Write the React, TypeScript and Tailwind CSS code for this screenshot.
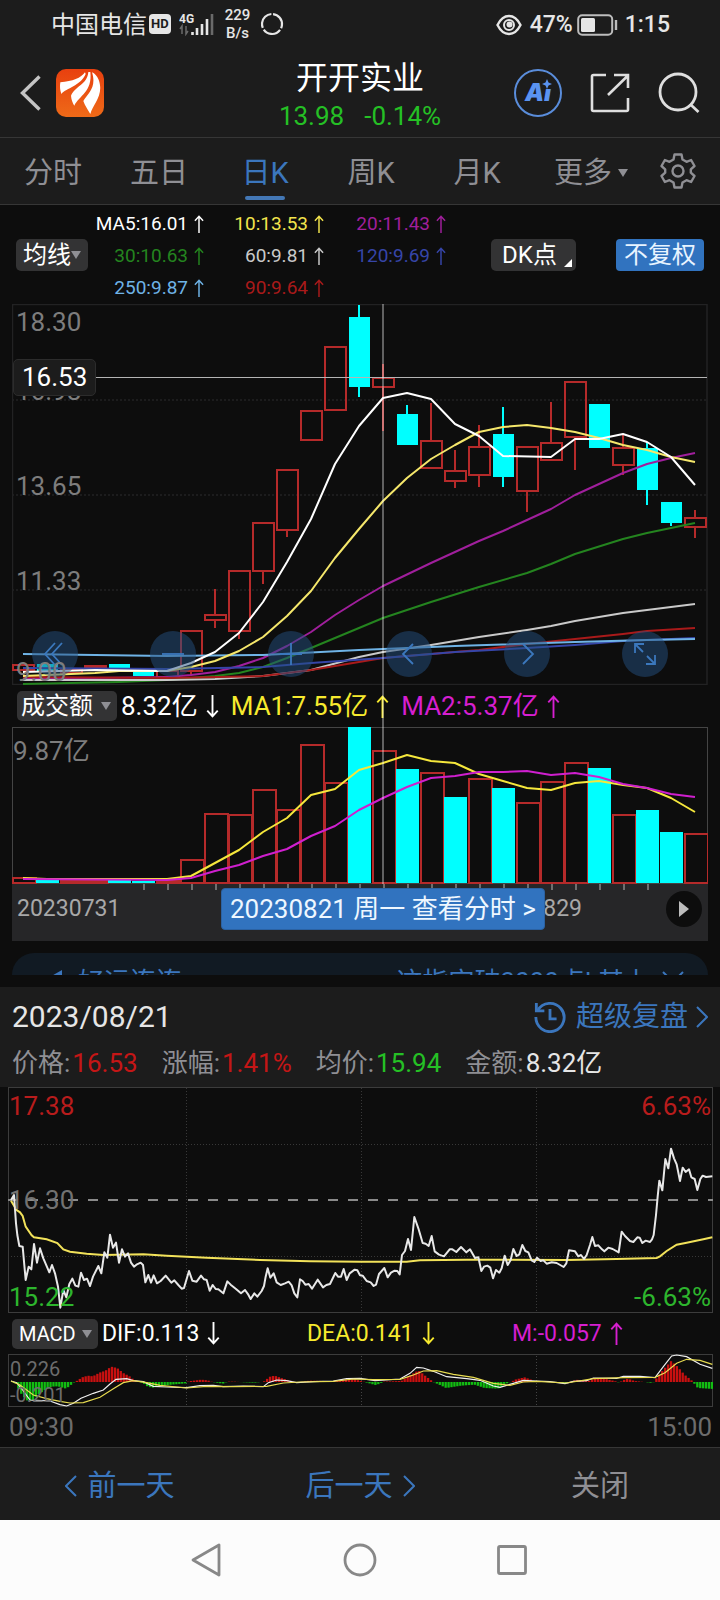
import type { ReactNode } from "react";

type Point = [number, number];

type Candle = {
	up: boolean;
	top: number;
	bottom: number;
	high?: number;
	low?: number;
};

// Centre of the n-th trading day on the daily charts
const dayX = (i: number) => 23 + i * 24;

const CANDLES: Candle[] = [
	{ up: true, top: 665, bottom: 670 },
	{ up: false, top: 664, bottom: 672 },
	{ up: true, top: 670, bottom: 673 },
	{ up: true, top: 666, bottom: 668 },
	{ up: false, top: 664, bottom: 668 },
	{ up: false, top: 672, bottom: 676 },
	{ up: true, top: 671, bottom: 677 },
	{ up: true, top: 631, bottom: 671, low: 676 },
	{ up: true, top: 615, bottom: 620, high: 589, low: 628 },
	{ up: true, top: 571, bottom: 631, low: 639 },
	{ up: true, top: 523, bottom: 571, low: 584 },
	{ up: true, top: 470, bottom: 530, low: 537 },
	{ up: true, top: 411, bottom: 440 },
	{ up: true, top: 347, bottom: 410 },
	{ up: false, top: 317, bottom: 387, high: 305, low: 397 },
	{ up: true, top: 378, bottom: 387, high: 364, low: 431 },
	{ up: false, top: 414, bottom: 445, high: 405 },
	{ up: true, top: 441, bottom: 468, high: 403 },
	{ up: true, top: 471, bottom: 481, high: 450, low: 488 },
	{ up: true, top: 447, bottom: 475, high: 425, low: 487 },
	{ up: false, top: 434, bottom: 477, high: 407, low: 487 },
	{ up: true, top: 447, bottom: 491, low: 512 },
	{ up: true, top: 443, bottom: 460, high: 402 },
	{ up: true, top: 382, bottom: 437, low: 470 },
	{ up: false, top: 404, bottom: 448 },
	{ up: true, top: 448, bottom: 465, high: 435, low: 475 },
	{ up: false, top: 448, bottom: 490, high: 442, low: 505 },
	{ up: false, top: 502, bottom: 523, low: 526 },
	{ up: true, top: 518, bottom: 527, high: 510, low: 538 },
];

// [day, y] pairs
const AVERAGES: { color: string; points: Point[] }[] = [
	{
		color: "#24841f",
		points: [
			[0, 684], [2, 683], [4, 682], [6, 680], [8, 676], [9, 673], [10, 667],
			[11, 658], [12, 648], [13, 638], [14, 628], [15, 618], [17, 602],
			[19, 587], [21, 573], [22, 564], [23, 554], [25, 539], [26, 533],
			[27, 528], [28, 523],
		],
	},
	{
		color: "#a01f9c",
		points: [
			[0, 679], [3, 678], [6, 677], [7, 675], [8, 672], [9, 666], [10, 658],
			[11, 646], [12, 632], [13, 615], [14, 600], [15, 586], [17, 563],
			[19, 541], [20, 531], [21, 520], [22, 509], [23, 495], [24, 484],
			[25, 473], [26, 464], [27, 458], [28, 453],
		],
	},
	{
		color: "#c9c9c9",
		points: [
			[0, 680], [6, 680], [8, 679], [10, 676], [12, 670], [14, 657],
			[15, 652], [17, 645], [19, 637], [21, 630], [22, 626], [23, 621],
			[25, 613], [26, 610], [28, 604],
		],
	},
	{
		color: "#a91a1a",
		points: [
			[0, 677], [6, 678], [10, 676], [12, 670], [14, 662], [15, 658],
			[17, 654], [19, 650], [21, 644], [23, 639], [25, 634], [26, 631],
			[28, 628],
		],
	},
	{
		color: "#3645a8",
		points: [
			[0, 668], [6, 669], [10, 667], [12, 663], [15, 658], [18, 652],
			[21, 648], [23, 645], [25, 641], [28, 638],
		],
	},
	{
		color: "#6fb3e6",
		points: [
			[0, 654], [6, 656], [10, 655], [14, 650], [18, 646], [23, 642],
			[26, 640], [28, 639],
		],
	},
	{
		color: "#f5e76b",
		points: [
			[0, 676], [2, 674], [3, 673], [4, 671], [6, 671], [7, 667], [8, 661],
			[9, 651], [10, 637], [11, 616], [12, 591], [13, 558], [14, 529],
			[15, 501], [16, 478], [17, 459], [18, 445], [19, 432], [20, 427],
			[21, 425], [22, 428], [23, 432], [24, 438], [25, 445], [26, 450],
			[27, 457], [28, 462],
		],
	},
	{
		color: "#ffffff",
		points: [
			[0, 672], [3, 670], [6, 671], [7, 663], [8, 652], [9, 633], [10, 602],
			[11, 562], [12, 519], [13, 464], [14, 426], [15, 398], [16, 393],
			[17, 399], [18, 424], [19, 436], [20, 456], [22, 457], [23, 439],
			[24, 439], [25, 434], [26, 442], [27, 457], [28, 485],
		],
	},
];

const VOLUMES: [boolean, number][] = [
	[true, 878], [false, 880], [true, 881], [true, 881], [false, 880],
	[false, 881], [true, 881], [true, 860], [true, 814], [true, 815],
	[true, 790], [true, 810], [true, 745], [true, 783], [false, 727],
	[true, 751], [false, 769], [true, 773], [false, 797], [true, 779],
	[false, 788], [true, 803], [true, 782], [true, 763], [false, 768],
	[true, 815], [false, 810], [false, 832], [true, 834],
];

const VOLUME_MA1: Point[] = [
	[0, 878], [1, 879], [6, 879], [7, 876], [8, 863], [9, 850], [10, 832],
	[11, 818], [12, 795], [13, 789], [14, 770], [15, 763], [16, 755], [17, 761],
	[18, 763], [19, 774], [20, 781], [21, 788], [22, 790], [23, 783], [24, 781],
	[25, 785], [26, 788], [27, 798], [28, 812],
];

const VOLUME_MA2: Point[] = [
	[0, 879], [6, 880], [7, 878], [8, 871], [9, 865], [10, 856], [11, 849],
	[12, 836], [13, 826], [14, 810], [15, 798], [16, 787], [17, 778], [18, 776],
	[19, 772], [20, 772], [21, 771], [22, 775], [23, 773], [24, 777], [25, 784],
	[26, 788], [27, 794], [28, 797],
];

const PRICE =
	"33,360 42,345 48,430 52,465 58,498 68,500 77,600 86,560 94,568 102,492 111,548 120,505 130,535 148,577 156,555 165,580 174,620 181,683 190,630 199,652 208,612 217,596 226,617 235,620 243,578 252,600 261,596 270,618 279,590 295,558 304,580 313,517 322,533 330,464 339,503 348,488 357,548 366,508 375,530 384,520 393,548 402,560 411,553 422,548 429,555 436,607 445,585 453,608 461,586 471,610 482,603 497,587 514,608 523,601 535,615 545,626 552,624 567,573 577,602 590,605 603,587 612,598 620,600 629,632 638,615 647,627 655,628 670,640 682,604 692,614 708,627 723,640 735,630 745,644 752,657 763,640 772,650 785,633 792,618 797,590 803,565 811,593 821,580 830,607 842,615 855,610 866,605 875,616 883,640 892,652 900,598 908,603 916,614 926,612 936,626 953,599 969,622 979,615 990,612 1006,579 1014,590 1023,590 1031,567 1040,600 1049,580 1064,569 1072,571 1080,586 1088,587 1100,603 1112,607 1121,618 1128,614 1137,582 1153,564 1163,592 1173,578 1184,572 1192,573 1199,583 1206,525 1215,513 1224,477 1233,510 1243,411 1255,445 1268,489 1277,491 1286,498 1295,468 1304,514 1317,524 1332,529 1349,508 1357,508 1369,516 1383,501 1399,517 1410,508 1425,534 1435,532 1444,573 1452,560 1462,557 1471,563 1479,595 1488,570 1498,578 1505,565 1514,527 1523,555 1532,540 1540,507 1550,528 1558,523 1567,495 1576,513 1585,517 1595,541 1603,546 1611,533 1622,543 1630,541 1640,551 1655,547 1670,549 1691,561 1699,550 1707,511 1725,514 1735,529 1743,525 1752,537 1760,525 1770,495 1777,471 1785,498 1795,496 1806,508 1813,514 1825,503 1838,507 1856,517 1865,455 1875,468 1890,483 1900,486 1912,472 1919,473 1927,489 1937,482 1950,486 1956,478 1961,465 1968,405 1973,350 1978,302 1987,331 1996,237 2005,265 2013,206 2022,235 2030,253 2040,303 2048,263 2057,276 2067,268 2074,292 2084,297 2092,330 2101,297 2108,287 2118,291 2137,289";

const AVERAGE_PRICE =
	"33,362 50,390 60,397 68,408 77,440 95,466 102,472 140,478 172,489 190,508 210,515 260,521 310,525 430,523 500,527 620,533 780,540 930,544 1080,545 1220,545 1260,541 1400,539 1700,540 1850,537 1970,534 1980,529 2000,513 2030,494 2060,488 2110,478 2137,472";

// [x, height above zero]
const MACD_SHAPE: Point[] = [
	[33, 0], [42, -3], [60, -35], [77, -55], [92, -57], [110, -38], [130, -25],
	[150, -14], [170, -13], [195, -20], [208, -10], [217, -2], [225, 2],
	[243, 14], [260, 19], [275, 17], [295, 28], [313, 34], [330, 46],
	[348, 42], [366, 27], [384, 18], [400, 5], [415, 0], [425, -3],
	[440, -14], [455, -17], [480, -12], [510, -8], [555, -4], [562, 2],
	[600, 7], [620, 5], [630, 1], [640, -1], [665, -5], [680, 1], [700, 1],
	[715, 0], [730, -1], [760, -2], [780, 0], [792, 3], [803, 15], [820, 19],
	[840, 12], [860, 6], [880, 0], [895, -2], [905, 1], [925, 4], [970, 3],
	[1000, 3], [1030, 7], [1060, 8], [1080, 3], [1090, 0], [1108, -5],
	[1122, -9], [1137, -5], [1146, 1], [1200, 3], [1210, 10], [1235, 25],
	[1252, 35], [1268, 22], [1290, 5], [1300, -2], [1310, -6], [1335, -18],
	[1380, -11], [1420, -8], [1450, -18], [1490, -20], [1515, -5], [1530, 1],
	[1545, 8], [1570, 14], [1590, 7], [1600, 1], [1660, 0], [1690, -4],
	[1710, 1], [1725, 7], [1760, 2], [1780, 11], [1810, 10], [1840, 3],
	[1855, -2], [1865, 5], [1880, 10], [1900, 3], [1930, 0], [1955, -3],
	[1965, 10], [1985, 35], [2010, 63], [2030, 45], [2050, 22], [2070, 6],
	[2078, -3], [2090, -18], [2139, -21],
];

const DIF =
	"33,213 50,218 68,240 90,270 110,271 150,273 180,284 200,288 220,280 243,265 280,250 310,240 330,222 348,208 380,206 400,212 430,215 460,229 500,231 560,233 600,227 640,226 670,230 730,228 790,230 805,218 830,210 860,212 890,218 940,215 1000,213 1040,206 1080,205 1125,212 1200,207 1230,190 1250,172 1270,174 1300,184 1340,200 1400,206 1440,211 1480,228 1500,232 1540,220 1570,211 1610,213 1650,215 1695,221 1720,214 1760,212 1780,204 1850,205 1870,199 1920,199 1965,203 1990,170 2015,138 2030,135 2060,140 2100,163 2137,175";

const DEA =
	"33,213 60,225 100,255 140,266 180,274 210,279 250,278 300,262 340,236 370,218 400,212 440,218 480,226 560,234 620,229 700,230 800,229 850,219 900,216 1000,214 1060,207 1120,209 1200,208 1240,195 1270,183 1310,182 1360,193 1420,202 1480,220 1530,226 1570,216 1610,214 1700,219 1780,206 1870,203 1965,202 1995,188 2030,160 2060,148 2100,151 2137,163";

function dayLine(points: Point[]) {
	return points.map(([i, y]) => `${dayX(i)},${y}`).join(" ");
}

function valueAt(shape: Point[], x: number) {
	for (let i = 1; i < shape.length; i++) {
		const [x0, y0] = shape[i - 1];
		const [x1, y1] = shape[i];
		if (x <= x1) return y0 + ((y1 - y0) * (x - x0)) / (x1 - x0);
	}
	return 0;
}

const MACD_BARS = Array.from({ length: 240 }, (_, i) => {
	const x = 34 + i * 8.78;
	return { x, h: valueAt(MACD_SHAPE, x) };
});

function Arrow({ down = false, large = false }: { down?: boolean; large?: boolean }) {
	return (
		<svg
			viewBox="0 0 12 22"
			fill="none"
			stroke="currentColor"
			strokeWidth="1.800"
			className={`${large ? "h-[23px] w-[13px]" : "h-[18px] w-[10px]"} ${down ? "rotate-180" : ""}`}
		>
			<path d="M6 22V1.5M1 7l5-5.500 5 5.500" />
		</svg>
	);
}

function Caret({ className = "" }: { className?: string }) {
	return (
		<svg viewBox="0 0 10 8" className={`h-2 w-2.5 ${className}`}>
			<path d="M0 0h10L5 8z" fill="currentColor" />
		</svg>
	);
}

function Chevron({ left = false, className = "" }: { left?: boolean; className?: string }) {
	return (
		<svg
			viewBox="0 0 12 22"
			fill="none"
			stroke="currentColor"
			strokeWidth="2"
			className={className}
		>
			<path d={left ? "M11 1L1 11l10 10" : "M1 1l10 10L1 21"} />
		</svg>
	);
}

function StatusBar() {
	return (
		<div className="flex h-12 items-center justify-between pr-[50px] pl-[51px] text-[#e6e6e6]">
			<div className="flex items-center">
				<span className="pt-0.5 text-[24px] leading-8">中国电信</span>
				<span className="ml-0.5 rounded-[4px] bg-[#e6e6e6] px-0.5 text-[13px] leading-5 font-bold text-[#1c1c1c]">
					HD
				</span>
				<svg viewBox="0 0 38 24" className="ml-2 h-6 w-[38px]">
					<text x="0" y="11" fontSize="12" fontWeight="700" fill="#e6e6e6">
						4G
					</text>
					<path
						d="M3 22v-8l-2 3M7 14v8l2-3"
						fill="none"
						stroke="#6a6a6a"
						strokeWidth="1.500"
					/>
					<path
						d="M13.500 23v-3M18 23v-7M23 23V12M28 23V7"
						stroke="#e6e6e6"
						strokeWidth="2.600"
					/>
					<path d="M33 23V2" stroke="#6a6a6a" strokeWidth="2.600" />
				</svg>
				<span className="ml-2 flex flex-col items-center text-[15px] leading-[18px] font-medium">
					<span>229</span>
					<span>B/s</span>
				</span>
				<svg viewBox="0 0 24 24" className="ml-2.5 size-6">
					<circle
						cx="12"
						cy="12"
						r="10"
						fill="none"
						stroke="#e6e6e6"
						strokeWidth="2.200"
						strokeDasharray="18.900 2"
						transform="rotate(-84 12 12)"
					/>
				</svg>
			</div>
			<div className="flex items-center pt-0.5">
				<svg viewBox="0 0 26 22" className="h-[22px] w-[26px]" fill="none" stroke="#e6e6e6">
					<path
						d="M1.500 11C4 6 8 2 13 2s9 4 11.500 9C22 16 18 20 13 20S4 16 1.500 11z"
						strokeWidth="2.400"
					/>
					<circle cx="13" cy="11" r="5" strokeWidth="2" />
					<circle cx="13.500" cy="10.500" r="3" fill="#e6e6e6" stroke="none" />
				</svg>
				<span className="ml-2 text-[23px] leading-8 font-medium">47%</span>
				<svg viewBox="0 0 42 22" className="ml-1 h-[22px] w-[42px]">
					<rect
						x="1.200"
						y="1.200"
						width="34"
						height="19.600"
						rx="4"
						fill="none"
						stroke="#bdbdbd"
						strokeWidth="2"
					/>
					<rect x="4" y="4" width="14" height="14" rx="1.500" fill="#e6e6e6" />
					<path d="M39 6v10" stroke="#bdbdbd" strokeWidth="2.400" />
				</svg>
				<span className="ml-1.5 text-[23px] leading-8 font-medium">1:15</span>
			</div>
		</div>
	);
}

function Header() {
	return (
		<header className="flex h-[90px] items-center border-b border-[#363636] px-5">
			<div className="flex flex-1 items-center">
				<button type="button" aria-label="返回">
					<svg viewBox="0 0 22 36" className="h-9 w-[22px]">
						<path d="M19.500 1.500L2.500 18l17 16.500" fill="none" stroke="#c4c4c4" strokeWidth="3.400" />
					</svg>
				</button>
				<svg viewBox="0 0 144 144" className="ml-3.5 size-12">
					<defs>
						<linearGradient id="logo" x1="0" y1="0" x2="0" y2="1">
							<stop offset="0" stopColor="#e8400f" />
							<stop offset="1" stopColor="#ee6a18" />
						</linearGradient>
					</defs>
					<rect width="144" height="144" rx="30" fill="url(#logo)" />
					<g fill="#fff">
						<path d="M87 10C75 27 50 37 13 40c-2 12-1 24 3 35C32 56 72 52 89 15z" />
						<path d="M97 9c-3 38-40 42-52 71 1 12 5 22 10 30 14-30 55-42 48-101z" />
						<path d="M108 10c14 44-10 62-26 86 5 14 13 26 21 39 8-30 42-56 25-103-5-11-12-19-20-22z" />
					</g>
				</svg>
			</div>
			<div className="flex flex-col items-center pt-1.5">
				<h1 className="text-[32px] leading-10 font-normal text-white">开开实业</h1>
				<p className="flex gap-5 text-[26px] leading-9 text-[#25c025]">
					<span>13.98</span>
					<span>-0.14%</span>
				</p>
			</div>
			<div className="flex flex-1 items-center justify-end gap-7">
				<button
					type="button"
					className="relative flex size-12 items-center justify-center rounded-full border-2 border-[#5a8ddb] text-[#5a93f0]"
				>
					<span className="font-['Inter'] text-[24px] leading-6 font-black italic">Ai</span>
					<svg viewBox="0 0 10 10" className="absolute top-2 right-2 size-2.5 bg-[#1c1c1c]">
						<path d="M5 0l1.500 3.500L10 5 6.500 6.500 5 10 3.500 6.500 0 5l3.500-1.500z" fill="currentColor" />
					</svg>
				</button>
				<button type="button" aria-label="分享">
					<svg viewBox="0 0 40 40" className="size-10" fill="none" stroke="#dedede" strokeWidth="2.600">
						<path d="M16 2H3.500Q2 2 2 3.500v33Q2 38 3.500 38h33q1.500 0 1.500-1.500V25" />
						<path d="M18 22L38 2.500M24 2h14v13" />
					</svg>
				</button>
				<button type="button" aria-label="搜索">
					<svg viewBox="0 0 42 42" className="size-[42px]" fill="none" stroke="#dedede" strokeWidth="2.800">
						<circle cx="20" cy="20" r="18" />
						<path d="M32 32l8.500 8" />
					</svg>
				</button>
			</div>
		</header>
	);
}

function Tabs() {
	const tabs = ["分时", "五日", "日K", "周K", "月K"];
	return (
		<nav className="flex h-[67px] border-b border-[#363636] text-[29px] leading-10 text-[#8f8f94]">
			{tabs.map((tab) => (
				<button
					key={tab}
					type="button"
					className={`relative flex-1 pt-1 ${tab === "日K" ? "text-[#3b76bd]" : ""}`}
				>
					{tab}
					{tab === "日K" && (
						<span className="absolute bottom-1 left-1/2 h-1 w-10 -translate-x-1/2 rounded-full bg-[#4377b5]" />
					)}
				</button>
			))}
			<button type="button" className="flex-1 pt-1">
				<span className="flex items-center justify-center gap-1.5 pl-4">
					更多
					<Caret />
				</span>
			</button>
			<button type="button" aria-label="设置" className="flex w-[84px] items-center justify-center">
				<svg viewBox="0 0 36 36" className="size-9" fill="none" stroke="#8f8f94" strokeWidth="2.400">
					<path
						strokeLinejoin="round"
						d="M14.500 1.500h7l1 5 4 2.300 4.600-1.800 3.400 6-3.700 3.300v3.400l3.700 3.300-3.400 6-4.600-1.800-4 2.300-1 5h-7l-1-5-4-2.300L4.900 29l-3.400-6 3.700-3.300v-3.400L1.500 13l3.400-6 4.600 1.800 4-2.300z"
					/>
					<circle cx="18" cy="18" r="5.500" />
				</svg>
			</button>
		</nav>
	);
}

function Legend() {
	const items = [
		{ text: "MA5:16.01", color: "text-white" },
		{ text: "10:13.53", color: "text-[#f2e44c]" },
		{ text: "20:11.43", color: "text-[#a01f9c]" },
		{ text: "30:10.63", color: "text-[#24841f]" },
		{ text: "60:9.81", color: "text-[#c9c9c9]" },
		{ text: "120:9.69", color: "text-[#3645a8]" },
		{ text: "250:9.87", color: "text-[#6fb3e6]" },
		{ text: "90:9.64", color: "text-[#a91a1a]" },
	];
	return (
		<div className="flex h-[99px] items-center px-4">
			<button
				type="button"
				className="flex h-8 w-[72px] items-center justify-center rounded-[5px] bg-[#333334] text-[24px] leading-8 text-white"
			>
				均线
				<Caret className="text-[#8f8f94]" />
			</button>
			<div className="grid grid-cols-[116px_120px_122px] pt-0.5 text-[19px] leading-8">
				{items.map((item) => (
					<span key={item.text} className={`flex items-center justify-end gap-1.5 ${item.color}`}>
						{item.text}
						<Arrow />
					</span>
				))}
			</div>
			<button
				type="button"
				className="relative ml-[45px] h-8 w-[85px] rounded-[5px] bg-[#333334] pr-2 text-[24px] leading-8 text-white"
			>
				DK点
				<svg viewBox="0 0 8 8" className="absolute right-1 bottom-1 size-2">
					<path d="M8 0v8H0z" fill="#fff" />
				</svg>
			</button>
			<button
				type="button"
				className="ml-auto h-8 w-[88px] rounded-[4px] bg-[#3173bf] text-[24px] leading-8 text-[#e8f4ff]"
			>
				不复权
			</button>
		</div>
	);
}

function RoundButton({ label, children }: { label: string; children: ReactNode }) {
	return (
		<button
			type="button"
			aria-label={label}
			className="flex size-[46px] items-center justify-center rounded-full bg-[#24507f]/50"
		>
			<svg viewBox="0 0 24 24" className="size-6" fill="none" stroke="#3b78bd" strokeWidth="1.800">
				{children}
			</svg>
		</button>
	);
}

function CandleChart() {
	return (
		<div className="relative">
			<svg viewBox="12 304 696 381" className="block h-auto w-full">
				<g stroke="#222223" strokeWidth="1.500" fill="none">
					<rect x="12.500" y="304.500" width="694.500" height="380" />
					<path d="M12 400h695M12 495h695M12 590h695" strokeDasharray="2 2" />
				</g>
				{CANDLES.map((c, i) => {
					const x = dayX(i);
					const color = c.up ? "#b52a2a" : "#00ffff";
					return (
						<g key={i} stroke={color} strokeWidth="2">
							{c.high && <path d={`M${x} ${c.high}V${c.top}`} />}
							{c.low && <path d={`M${x} ${c.bottom}V${c.low}`} />}
							{c.up ? (
								<rect x={x - 10} y={c.top} width="21" height={c.bottom - c.top} fill="none" />
							) : (
								<rect
									x={x - 10}
									y={c.top}
									width="21"
									height={c.bottom - c.top}
									fill={color}
									stroke="none"
								/>
							)}
						</g>
					);
				})}
				{AVERAGES.map((line) => (
					<polyline
						key={line.color}
						points={dayLine(line.points)}
						fill="none"
						stroke={line.color}
						strokeWidth="2"
						strokeLinejoin="round"
					/>
				))}
				<path d="M96 377.500h611" stroke="#b4b4b4" strokeWidth="1.200" />
			</svg>
			<div className="absolute inset-x-0 bottom-2 flex justify-between pr-10 pl-5">
				<RoundButton label="最早">
					<path d="M12 1L2 12l10 11M19 1L9 12l10 11" />
				</RoundButton>
				<RoundButton label="缩小">
					<path d="M1 12h22" />
				</RoundButton>
				<RoundButton label="放大">
					<path d="M1 12h22M12 1v22" />
				</RoundButton>
				<RoundButton label="左移">
					<path d="M16 2L6 12l10 10" />
				</RoundButton>
				<RoundButton label="右移">
					<path d="M8 2l10 10L8 22" />
				</RoundButton>
				<RoundButton label="全屏">
					<path d="M2 11V2h9M2 2l8 8M22 13v9h-9M22 22l-8-8" />
				</RoundButton>
			</div>
			<div className="text-[26px] leading-8 text-[#7d7d7d]">
				<span className="absolute top-[2px] left-1">18.30</span>
				<span className="absolute top-[71px] left-1">16.98</span>
				<span className="absolute top-[166px] left-1">13.65</span>
				<span className="absolute top-[261px] left-1">11.33</span>
				<span className="absolute top-[352px] left-1">9.00</span>
			</div>
			<span className="absolute top-[55px] left-px rounded-[5px] border border-[#2c2c2c] bg-[#1c1c1c] px-2 text-[26px] leading-[35px] text-white">
				16.53
			</span>
		</div>
	);
}

function VolumeHeader() {
	return (
		<div className="flex h-[42px] items-center pl-[5px] text-[26px] leading-8">
			<button
				type="button"
				className="flex h-[30px] w-[100px] items-center justify-between rounded-[5px] bg-[#333334] pr-1.5 pl-1 text-[24px] leading-[30px] text-white"
			>
				成交额
				<Caret className="text-[#8f8f94]" />
			</button>
			<span className="ml-1 flex items-center gap-2 text-white">
				8.32亿
				<Arrow down large />
			</span>
			<span className="ml-3 flex items-center gap-2 text-[#f7ea2e]">
				MA1:7.55亿
				<Arrow large />
			</span>
			<span className="ml-3 flex items-center gap-2 text-[#d61fd0]">
				MA2:5.37亿
				<Arrow large />
			</span>
		</div>
	);
}

function VolumeChart() {
	return (
		<div className="relative">
			<svg viewBox="12 727 696 157" className="block h-auto w-full">
				<rect x="12.500" y="727.500" width="695" height="156" fill="none" stroke="#444" />
				{VOLUMES.map(([up, y], i) => {
					const x = dayX(i);
					return up ? (
						<rect
							key={i}
							x={x - 10}
							y={y}
							width="23"
							height={883 - y}
							fill="none"
							stroke="#b52a2a"
							strokeWidth="2"
						/>
					) : (
						<rect key={i} x={x - 11} y={y} width="23" height={883 - y} fill="#00ffff" />
					);
				})}
				<g fill="none" strokeWidth="2" strokeLinejoin="round">
					<polyline points={dayLine(VOLUME_MA1)} stroke="#f5e73c" />
					<polyline points={dayLine(VOLUME_MA2)} stroke="#cf1fce" />
				</g>
			</svg>
			<span className="absolute top-2 left-px text-[26px] leading-8 text-[#7d7d7d]">9.87亿</span>
		</div>
	);
}

function DateAxis() {
	return (
		<div className="relative h-[57px] bg-[#262628]">
			<svg viewBox="12 884 696 6" className="block h-auto w-full">
				{Array.from({ length: 22 }, (_, i) => (
					<path key={i} d={`M${144 + i * 24} 884v6`} stroke="#6f6f6f" strokeWidth="2" />
				))}
			</svg>
			<div className="absolute inset-x-0 top-1 flex h-[42px] items-center pr-1.5 pl-[5px] text-[23px] leading-8 text-[#a8a8a8]">
				<span>20230731</span>
				<span className="ml-auto pr-[84px]">20230829</span>
				<button
					type="button"
					aria-label="播放"
					className="flex size-9 items-center justify-center rounded-full bg-[#0d0d0d]"
				>
					<svg viewBox="0 0 10 16" className="h-4 w-2.5">
						<path d="M0 0l10 8-10 8z" fill="#bdbdbd" />
					</svg>
				</button>
			</div>
			<button
				type="button"
				className="absolute top-1 left-[209px] h-[42px] rounded-[4px] border border-[#2b62a3] bg-[#3173bf] px-2 text-[26px] leading-8 whitespace-nowrap text-[#eef7ff]"
			>
				20230821 周一 查看分时 &gt;
			</button>
		</div>
	);
}

function Banner() {
	return (
		<div className="mx-3 mt-3 h-[22px] overflow-hidden rounded-t-[34px] bg-[#111a23]">
			<a
				href="#banner"
				className="flex h-[58px] items-center pr-6 pl-9 text-[26px] leading-8 text-[#3b76bd]"
			>
				<svg viewBox="0 0 16 24" className="h-6 w-4">
					<path d="M14 0v24L0 14V8z" fill="currentColor" />
				</svg>
				<span className="ml-3.5">好运连连</span>
				<span className="ml-auto">这指定破3000点! 其上</span>
				<svg viewBox="0 0 22 22" className="ml-3 size-[22px]">
					<path d="M1 1l20 20M21 1L1 21" stroke="currentColor" strokeWidth="2" />
				</svg>
			</a>
		</div>
	);
}

function DayPanelHeader() {
	return (
		<div className="h-[100px] bg-[#1c1c1c] px-3 pt-2.5">
			<div className="flex h-10 items-center justify-between">
				<h2 className="text-[30px] leading-10 text-[#e6e6e6]">2023/08/21</h2>
				<a href="#replay" className="flex items-center text-[28px] leading-10 text-[#3b76bd]">
					<svg
						viewBox="0 0 34 34"
						className="mr-2.5 size-8"
						fill="none"
						stroke="currentColor"
						strokeWidth="3"
					>
						<path d="M4 10A15 15 0 1 1 2 17" />
						<path d="M2.500 2v8.500H11" />
						<path d="M17 8.500V19h7" />
					</svg>
					超级复盘
					<Chevron className="ml-2 h-[22px] w-3" />
				</a>
			</div>
			<dl className="mt-1.5 flex h-10 items-center gap-6 text-[26px] leading-10 text-[#8f8f94]">
				<div className="flex gap-0.5">
					<dt>价格:</dt>
					<dd className="text-[#c41616]">16.53</dd>
				</div>
				<div className="flex gap-0.5">
					<dt>涨幅:</dt>
					<dd className="text-[#c41616]">1.41%</dd>
				</div>
				<div className="flex gap-0.5">
					<dt>均价:</dt>
					<dd className="text-[#25c025]">15.94</dd>
				</div>
				<div className="flex gap-0.5">
					<dt>金额:</dt>
					<dd className="text-[#e6e6e6]">8.32亿</dd>
				</div>
			</dl>
		</div>
	);
}

function IntradayChart() {
	return (
		<div className="relative text-[26px] leading-8">
			{/* three units to the pixel */}
			<svg viewBox="24 21 2115 678" className="block h-auto w-full" fill="none">
				<rect x="25.500" y="22.500" width="2112" height="675" stroke="#3c3c3c" strokeWidth="3" />
				<path
					d="M33 193.500h2105M33 529.500h2105M559.500 24v672M1084.500 24v672M1609.500 24v672"
					stroke="#383838"
					strokeWidth="3"
					strokeDasharray="3 6"
				/>
				<path d="M24 360h2115" stroke="#8a8a8a" strokeWidth="6" strokeDasharray="30 30" />
				<polyline points={AVERAGE_PRICE} stroke="#f2e25a" strokeWidth="6" />
				<polyline points={PRICE} stroke="#e8e8e8" strokeWidth="6" strokeLinejoin="round" />
			</svg>
			<span className="absolute top-[3px] left-px text-[#b81c1c]">17.38</span>
			<span className="absolute top-1/2 left-px -translate-y-1/2 text-[#727272]">16.30</span>
			<span className="absolute bottom-0 left-px text-[#2db52d]">15.22</span>
			<span className="absolute top-[3px] right-0.5 text-[#b81c1c]">6.63%</span>
			<span className="absolute right-0.5 bottom-0 text-[#2db52d]">-6.63%</span>
		</div>
	);
}

function MacdHeader() {
	return (
		<div className="flex h-[41px] items-center pl-1 text-[23px] leading-8">
			<div className="flex w-[295px] items-center">
				<button
					type="button"
					className="flex h-[30px] w-[86px] items-center justify-between rounded-[5px] bg-[#333334] pr-1.5 pl-[7px] text-[20px] leading-[30px] text-white"
				>
					MACD
					<Caret className="text-[#8f8f94]" />
				</button>
				<span className="ml-1 flex items-center gap-2 text-white">
					DIF:0.113
					<Arrow down large />
				</span>
			</div>
			<span className="flex w-[205px] items-center gap-2 text-[#f7ea2e]">
				DEA:0.141
				<Arrow down large />
			</span>
			<span className="flex items-center gap-2 text-[#d61fd0]">
				M:-0.057
				<Arrow large />
			</span>
		</div>
	);
}

function MacdChart() {
	return (
		<div className="relative text-[20px] leading-6 text-[#6c6c6c]">
			<svg viewBox="24 132 2115 159" className="block h-auto w-full" fill="none">
				<rect x="25.500" y="133.500" width="2112" height="156" stroke="#3c3c3c" strokeWidth="3" />
				<path
					d="M559.500 138v150M1084.500 138v150M1609.500 138v150"
					stroke="#444"
					strokeWidth="3"
					strokeDasharray="3 6"
				/>
				{MACD_BARS.map((bar) => (
					<rect
						key={bar.x}
						x={bar.x}
						y={bar.h > 0 ? 216 - bar.h : 216}
						width="7"
						height={Math.abs(bar.h)}
						fill={bar.h > 0 ? "#c81010" : "#12bd12"}
					/>
				))}
				<polyline points={DIF} stroke="#f0f0f0" strokeWidth="3.500" />
				<polyline points={DEA} stroke="#e8dc50" strokeWidth="3.500" />
			</svg>
			<span className="absolute top-[3px] left-0.5">0.226</span>
			<span className="absolute bottom-0 left-0.5">-0.201</span>
		</div>
	);
}

function DayFooter() {
	return (
		<div className="grid h-[73px] grid-cols-3 border-t border-[#363636] bg-[#1c1c1c] pt-1 text-[29px] leading-10 text-[#3b76bd]">
			<button type="button" className="flex items-center justify-center gap-2.5">
				<Chevron left className="h-[22px] w-3" />
				前一天
			</button>
			<button type="button" className="flex items-center justify-center gap-2.5">
				后一天
				<Chevron className="h-[22px] w-3" />
			</button>
			<button type="button" className="text-[#8f8f94]">
				关闭
			</button>
		</div>
	);
}

function SystemNav() {
	return (
		<div className="flex h-20 items-center justify-center gap-[88px] bg-[#fcfcfc]">
			<button type="button" aria-label="后退" className="flex w-16 justify-center">
				<svg viewBox="0 0 34 34" className="size-[34px]" fill="none" stroke="#888" strokeWidth="2.800">
					<path strokeLinejoin="round" d="M28 2v30L2 17z" />
				</svg>
			</button>
			<button type="button" aria-label="主页" className="flex w-16 justify-center">
				<svg viewBox="0 0 34 34" className="size-[34px]" fill="none" stroke="#888" strokeWidth="2.800">
					<circle cx="17" cy="17" r="15" />
				</svg>
			</button>
			<button type="button" aria-label="最近任务" className="flex w-16 justify-center">
				<svg viewBox="0 0 34 34" className="size-[34px]" fill="none" stroke="#888" strokeWidth="2.800">
					<rect x="3.500" y="3.500" width="27" height="27" rx="1.500" />
				</svg>
			</button>
		</div>
	);
}

export default function App() {
	return (
		<div className="bg-[#0d0d0d] font-['Roboto','Noto_Sans_CJK_SC',sans-serif]">
			<div className="bg-[#1c1c1c]">
				<StatusBar />
				<Header />
				<Tabs />
			</div>

			<Legend />

			{/* Daily candles and turnover */}
			<div className="px-3">
				<div className="relative">
					<CandleChart />
					<VolumeHeader />
					<VolumeChart />
					<div className="absolute inset-y-0 left-[53.200%] w-0.5 bg-white/35" />
				</div>
				<DateAxis />
			</div>
			<Banner />

			{/* Replay of the selected day */}
			<div className="mt-3">
				<DayPanelHeader />
				<div className="pr-[7px] pl-2">
					<IntradayChart />
					<MacdHeader />
					<MacdChart />
					<div className="flex h-10 items-center justify-between px-px text-[26px] leading-8 text-[#6c6c6c]">
						<span>09:30</span>
						<span>15:00</span>
					</div>
				</div>
				<DayFooter />
			</div>

			<SystemNav />
		</div>
	);
}
